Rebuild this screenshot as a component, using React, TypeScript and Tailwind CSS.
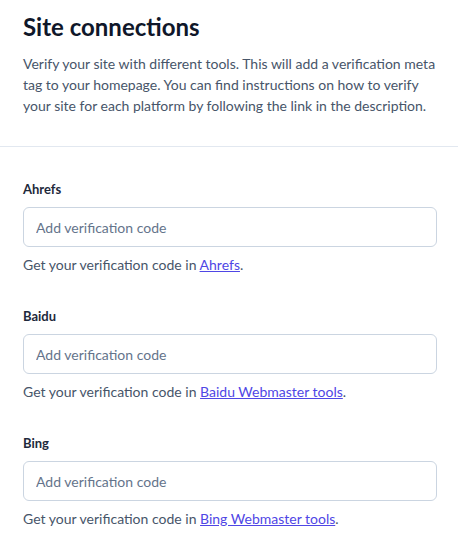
const platforms = [
  { name: "Ahrefs", link: "Ahrefs" },
  { name: "Baidu", link: "Baidu Webmaster tools" },
  { name: "Bing", link: "Bing Webmaster tools" },
]

const App = () => {
  return (
    <main className="w-[458px] bg-white font-['Lato',sans-serif] text-[#111827]">
      {/* Header */}
      <header className="pl-[23px] pr-[21px] pt-[10px] pb-[30px] border-b border-[#e2e8f0]">
        <h1 className="text-[24px] leading-[34px] font-bold text-[#0f172a]">Site connections</h1>
        <p className="mt-[9px] text-[14px] leading-[21px] text-[#475569]">
          Verify your site with different tools. This will add a verification meta tag to your homepage. You can find
          instructions on how to verify your site for each platform by following the link in the description.
        </p>
      </header>

      {/* Platforms */}
      <section className="pl-[23px] pr-[21px] pt-[32px] flex flex-col gap-[31px]">
        {platforms.map((p) => (
          <div key={p.name} className="flex flex-col">
            <label className="text-[13px] leading-[20px] font-bold text-[#1e293b]">{p.name}</label>
            <input
              type="text"
              placeholder="Add verification code"
              className="mt-[8px] h-[40px] w-full rounded-[6px] border border-[#cbd5e1] px-[12px] text-[14px] placeholder:text-[#64748b] focus:outline-none"
            />
            <p className="mt-[8px] text-[14px] leading-[20px] text-[#475569]">
              Get your verification code in{" "}
              <a href="#" className="text-[#4f46e5] underline">
                {p.link}
              </a>
              .
            </p>
          </div>
        ))}
      </section>
    </main>
  )
}

export default App
